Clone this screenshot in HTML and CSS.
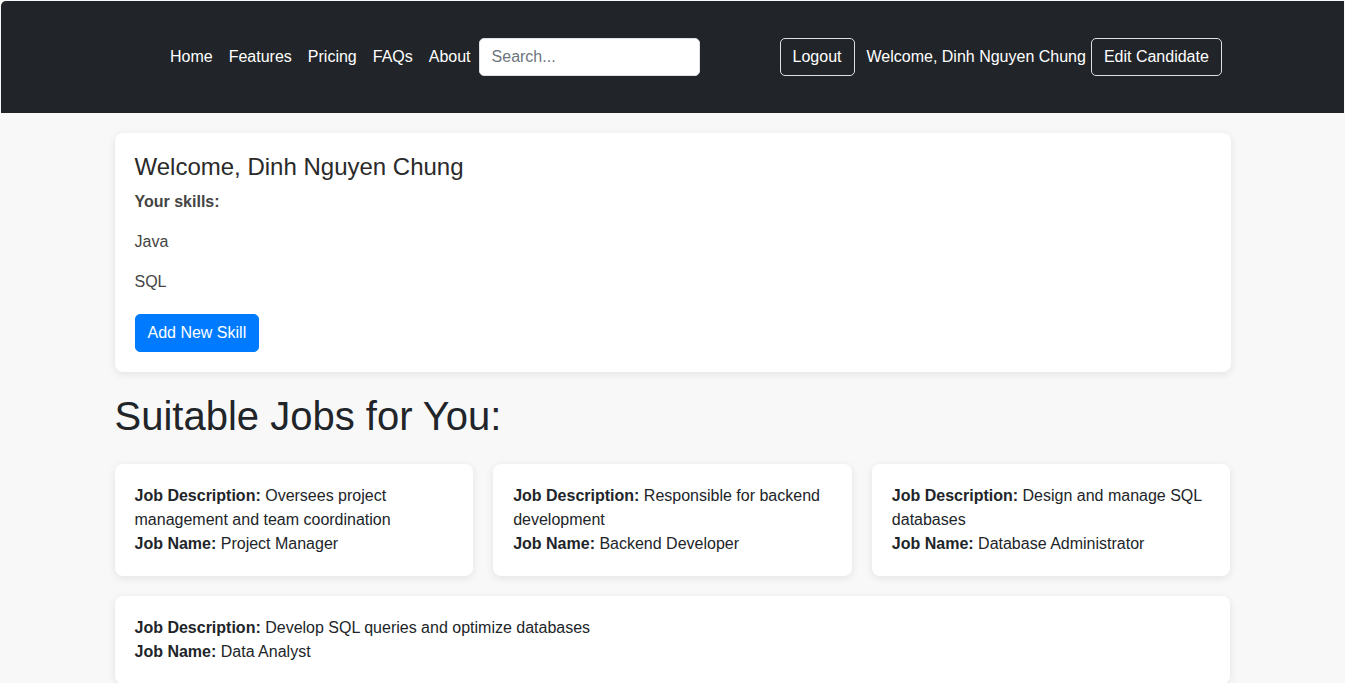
FILE: index.html
```html
<!DOCTYPE html>
<html lang="en">
<head>
<meta charset="utf-8">
<title>Candidate Dashboard</title>
<link rel="stylesheet" href="styles.css">
</head>
<body>
<header class="topbar">
  <nav class="nav">
    <ul class="nav-links">
      <li><a href="#" class="nav-link">Home</a></li>
      <li><a href="#" class="nav-link">Features</a></li>
      <li><a href="#" class="nav-link">Pricing</a></li>
      <li><a href="#" class="nav-link">FAQs</a></li>
      <li><a href="#" class="nav-link">About</a></li>
    </ul>
    <input class="search" type="search" placeholder="Search...">
    <div class="nav-right">
      <button class="btn-outline">Logout</button>
      <span class="nav-welcome">Welcome, Dinh Nguyen Chung</span>
      <button class="btn-outline btn-edit">Edit Candidate</button>
    </div>
  </nav>
</header>
<main class="container">
  <section class="card welcome-card">
    <h3 class="welcome-title">Welcome, Dinh Nguyen Chung</h3>
    <p class="skills-label">Your skills:</p>
    <p class="skill">Java</p>
    <p class="skill">SQL</p>
    <button class="btn-primary">Add New Skill</button>
  </section>
  <h1 class="jobs-title">Suitable Jobs for You:</h1>
  <div class="jobs-grid">
    <div class="card job-card">
      <p class="job-line"><strong>Job Description:</strong> Oversees project management and team coordination</p>
      <p class="job-line"><strong>Job Name:</strong> Project Manager</p>
    </div>
    <div class="card job-card">
      <p class="job-line"><strong>Job Description:</strong> Responsible for backend development</p>
      <p class="job-line"><strong>Job Name:</strong> Backend Developer</p>
    </div>
    <div class="card job-card">
      <p class="job-line"><strong>Job Description:</strong> Design and manage SQL databases</p>
      <p class="job-line"><strong>Job Name:</strong> Database Administrator</p>
    </div>
    <div class="card job-card job-wide">
      <p class="job-line"><strong>Job Description:</strong> Develop SQL queries and optimize databases</p>
      <p class="job-line"><strong>Job Name:</strong> Data Analyst</p>
    </div>
  </div>
</main>
</body>
</html>
```
FILE: styles.css
```css
* { box-sizing: border-box; }

html, body {
  margin: 0;
  padding: 0;
}

body {
  background: #f8f8f8;
  font-family: "Liberation Sans", Arial, sans-serif;
  font-size: 16px;
  line-height: 24px;
  color: #212529;
}

.topbar {
  background: #212529;
  height: 112px;
  margin: 1px 1px 0 1px;
  border-top-left-radius: 5px;
  display: flex;
  align-items: center;
}

.nav {
  display: flex;
  align-items: center;
  padding-left: 161px;
  width: 100%;
}

.nav-links {
  display: flex;
  list-style: none;
  margin: 0;
  padding: 0;
}

.nav-link {
  display: block;
  color: #fff;
  text-decoration: none;
  padding: 8px 8px;
}

.search {
  width: 221px;
  height: 38px;
  border: 1px solid #dee2e6;
  border-radius: 5px;
  padding: 6px 12px;
  font-family: inherit;
  font-size: 16px;
  color: #212529;
  background: #fff;
  outline: none;
}

.search::placeholder { color: #6c757d; }

.nav-right {
  display: flex;
  align-items: center;
  margin-left: 80px;
}

.btn-outline {
  height: 38px;
  padding: 6px 12px;
  border: 1px solid #e0e0e0;
  border-radius: 5px;
  background: transparent;
  color: #fff;
  font-family: inherit;
  font-size: 16px;
  line-height: 24px;
}

.nav-welcome {
  color: #fff;
  margin-left: 12px;
  margin-right: 5px;
}

.container {
  width: 1116px;
  margin: 0 auto;
  padding-top: 20px;
  padding-bottom: 40px;
}

.card {
  background: #fff;
  border-radius: 8px;
  box-shadow: 0 2px 8px rgba(0, 0, 0, 0.09);
}

.welcome-card {
  padding: 20px;
}

.welcome-title {
  margin: 0 0 8px 0;
  font-size: 24px;
  font-weight: 400;
  line-height: 28.8px;
  color: #2a2a2a;
}

.skills-label {
  margin: 0 0 16px 0;
  font-weight: 700;
  color: #444;
}

.skill {
  margin: 0 0 16px 0;
  color: #444;
}

.btn-primary {
  margin-top: 4px;
  height: 38px;
  padding: 6px 12px;
  background: #007bff;
  border: 1px solid #007bff;
  border-radius: 5px;
  color: #fff;
  font-family: inherit;
  font-size: 16px;
  line-height: 24px;
}

.jobs-title {
  margin: 20px 0 24px 0;
  font-size: 40px;
  font-weight: 400;
  line-height: 48px;
  color: #212529;
}

.jobs-grid {
  display: grid;
  grid-template-columns: repeat(3, 1fr);
  gap: 20px;
}

.job-card {
  padding: 20px;
  color: #212529;
}

.job-line {
  margin: 0;
}

.job-wide {
  grid-column: 1 / -1;
}
```
